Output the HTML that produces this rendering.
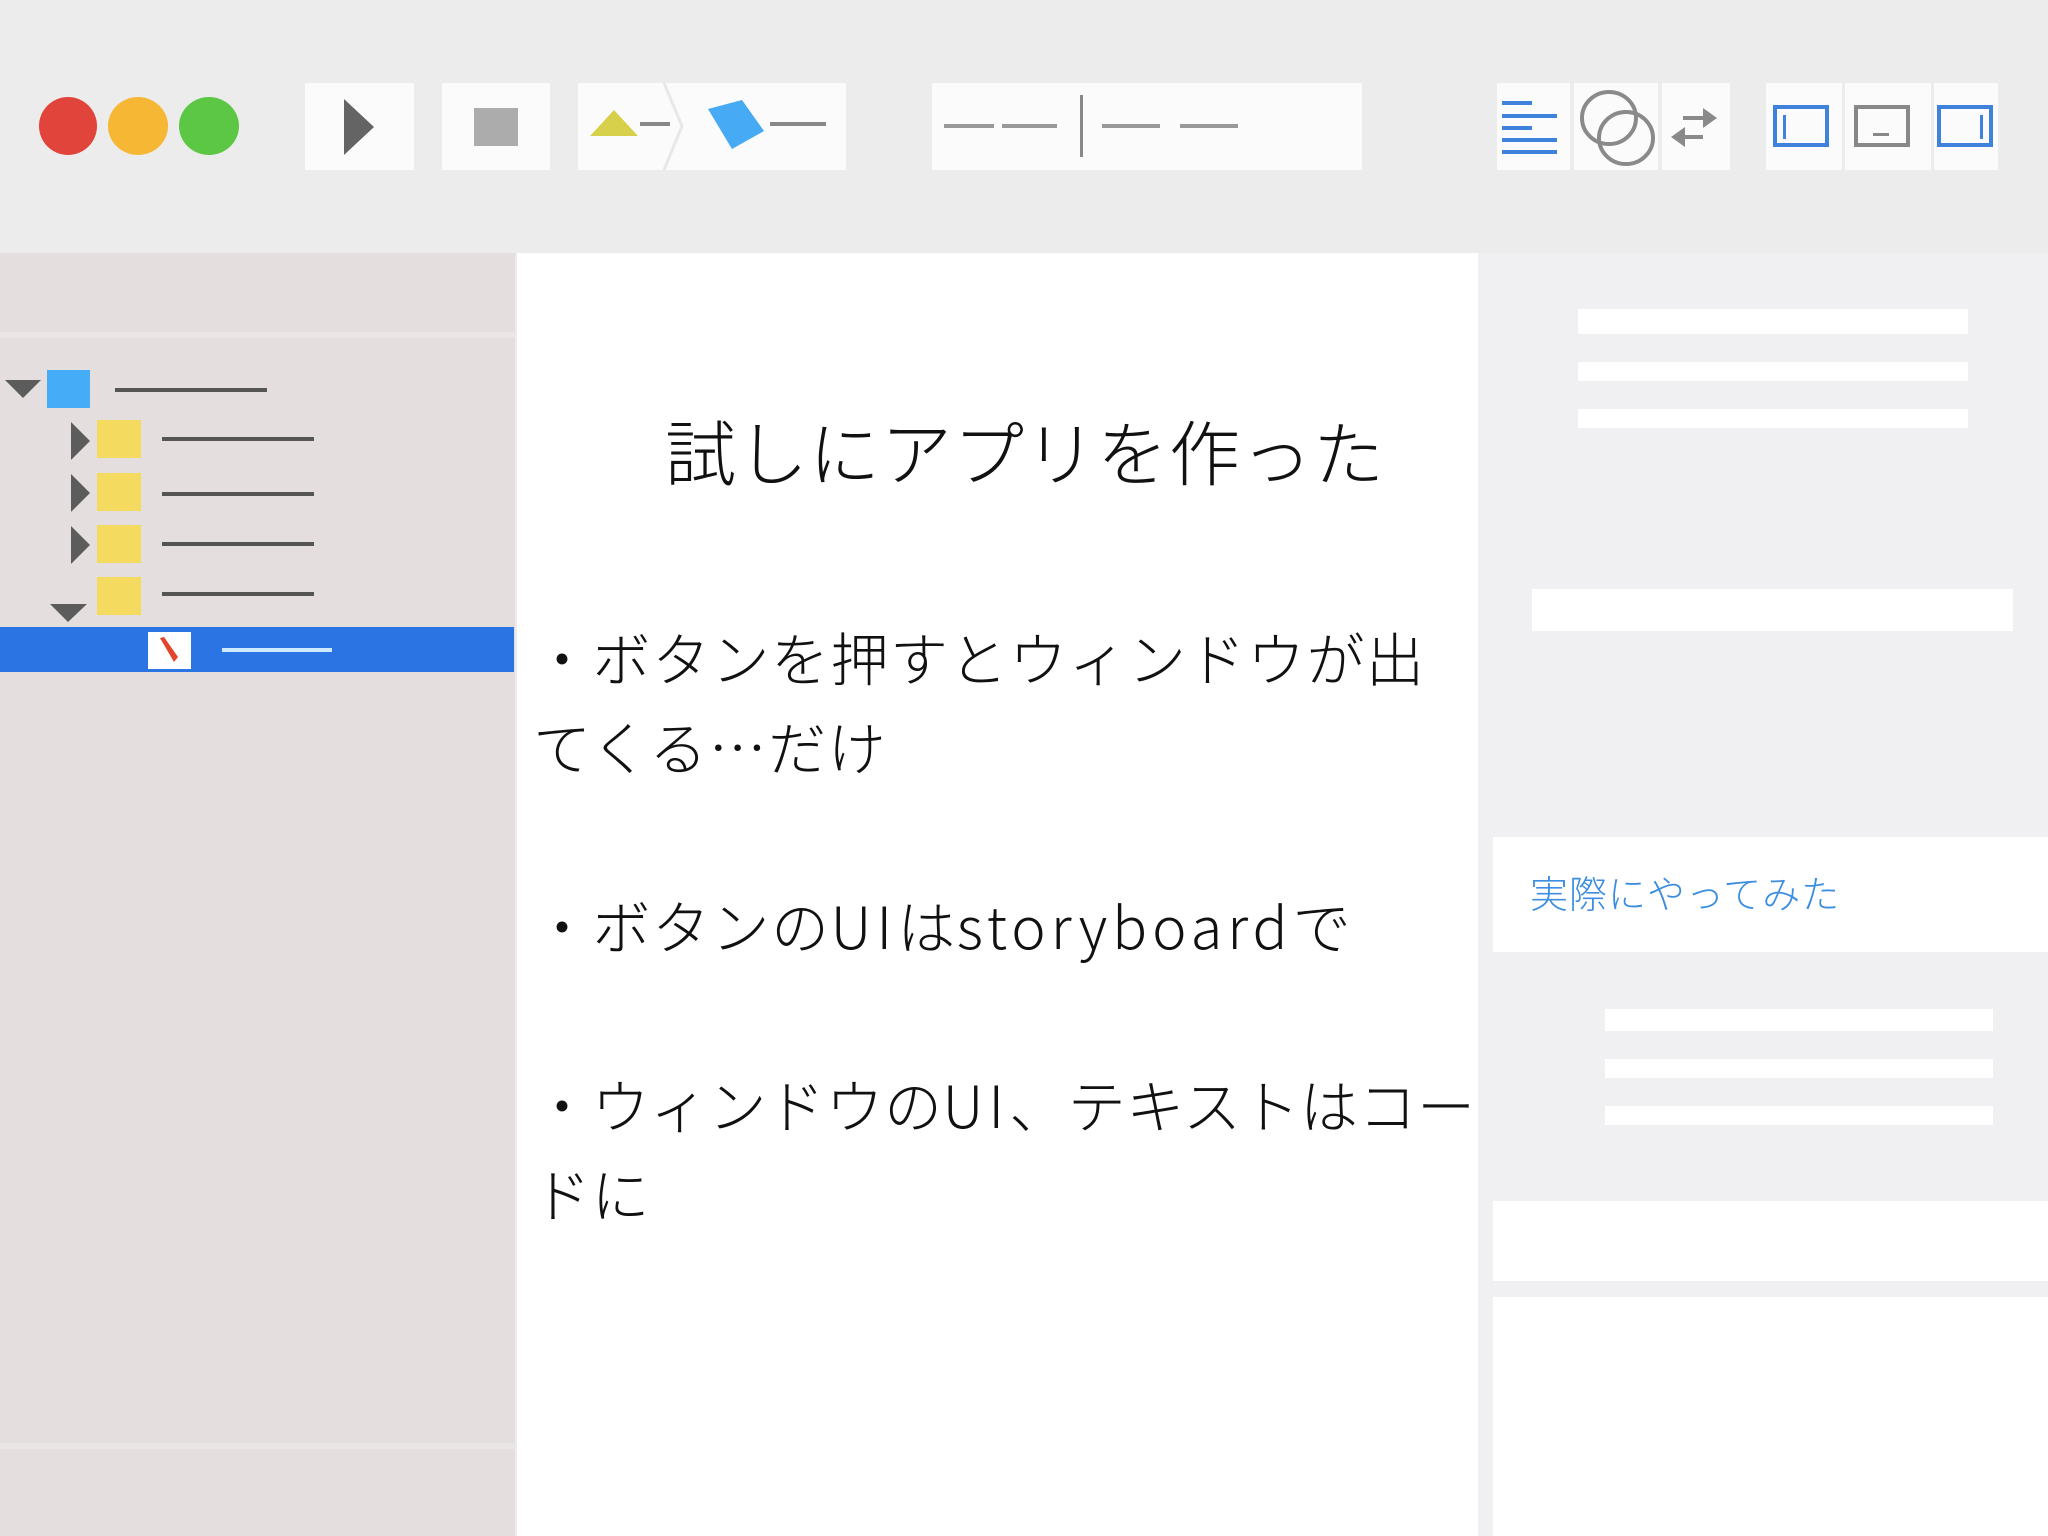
<!DOCTYPE html>
<html><head><meta charset="utf-8"><style>
*{margin:0;padding:0;box-sizing:border-box}
body{width:2048px;height:1536px;position:relative;overflow:hidden;background:#ececec;font-family:"Liberation Sans","Noto Sans CJK JP",sans-serif}
.a{position:absolute}
.btn{position:absolute;background:#fbfbfb}
.txt{position:absolute;white-space:nowrap;color:#111;font-weight:300;font-family:"Noto Sans CJK JP","Liberation Sans",sans-serif}
.w{position:absolute;background:#fff}
.lat{letter-spacing:5px}
</style></head><body>
<!-- toolbar -->
<div class="a" style="left:39px;top:97px;width:58px;height:58px;border-radius:50%;background:#e0443a"></div>
<div class="a" style="left:108px;top:97px;width:60px;height:58px;border-radius:50%;background:#f6b735"></div>
<div class="a" style="left:179px;top:97px;width:60px;height:58px;border-radius:50%;background:#5bc745"></div>
<div class="btn" style="left:305px;top:83px;width:109px;height:87px"></div>
<svg class="a" style="left:340px;top:97px" width="40" height="60"><polygon points="4,2 34,30 4,58" fill="#646464"/></svg>
<div class="btn" style="left:442px;top:83px;width:108px;height:87px"></div>
<div class="a" style="left:474px;top:108px;width:44px;height:38px;background:#acacac"></div>
<div class="btn" style="left:578px;top:83px;width:268px;height:87px"></div>
<svg class="a" style="left:578px;top:83px" width="268" height="87"><polyline points="86,0 104,43 86,87" fill="none" stroke="#e8e8e8" stroke-width="3"/><polygon points="12,53 36,27 60,53" fill="#d6d04a"/><rect x="62" y="39" width="30" height="4" fill="#888"/><polygon points="130,26 164,17 186,48 154,66" fill="#46aaf5"/><rect x="192" y="39" width="56" height="4" fill="#888"/></svg>
<div class="btn" style="left:932px;top:83px;width:430px;height:87px"></div>
<svg class="a" style="left:932px;top:83px" width="430" height="87"><rect x="12" y="41" width="50" height="4" fill="#999"/><rect x="70" y="41" width="55" height="4" fill="#999"/><rect x="148" y="12" width="3" height="62" fill="#888"/><rect x="170" y="41" width="58" height="4" fill="#999"/><rect x="248" y="41" width="58" height="4" fill="#999"/></svg>
<div class="btn" style="left:1497px;top:83px;width:73px;height:87px"></div>
<div class="btn" style="left:1574px;top:83px;width:84px;height:87px"></div>
<div class="btn" style="left:1662px;top:83px;width:68px;height:87px"></div>
<svg class="a" style="left:1497px;top:83px" width="233" height="87"><g fill="#3f82dc"><rect x="5" y="18" width="30" height="4"/><rect x="5" y="31" width="55" height="4"/><rect x="5" y="43" width="30" height="4"/><rect x="5" y="55" width="55" height="4"/><rect x="5" y="67" width="55" height="4"/></g><g fill="none" stroke="#8a8a8a" stroke-width="4"><ellipse cx="112" cy="35" rx="27" ry="26"/><ellipse cx="129" cy="55" rx="27" ry="26"/></g><g fill="#8a8a8a"><rect x="186" y="33" width="24" height="4"/><polygon points="206,25 220,35 206,45"/><rect x="184" y="52" width="22" height="4"/><polygon points="188,44 174,54 188,64"/></g></svg>
<div class="btn" style="left:1766px;top:83px;width:76px;height:87px"></div>
<div class="btn" style="left:1845px;top:83px;width:86px;height:87px"></div>
<div class="btn" style="left:1934px;top:83px;width:64px;height:87px"></div>
<svg class="a" style="left:1766px;top:83px" width="232" height="87"><g fill="none" stroke-width="4"><rect x="9" y="24" width="52" height="38" stroke="#3f82dc"/><rect x="90" y="24" width="52" height="38" stroke="#888"/><rect x="173" y="24" width="52" height="38" stroke="#3f82dc"/></g><rect x="17" y="32" width="3" height="24" fill="#3f82dc"/><rect x="107" y="50" width="16" height="3" fill="#888"/><rect x="214" y="32" width="3" height="24" fill="#3f82dc"/></svg>
<!-- sidebar -->
<div class="a" style="left:0;top:253px;width:515px;height:1283px;background:#e4dede"></div>
<div class="a" style="left:0;top:332px;width:515px;height:6px;background:#ebe6e6"></div>
<div class="a" style="left:0;top:1443px;width:515px;height:6px;background:#ebe6e6"></div>
<svg class="a" style="left:0;top:370px" width="515" height="310"><g fill="#5c5c5c"><polygon points="5,10 41,10 23,28"/><polygon points="71,52 90,71 71,90"/><polygon points="71,104 90,123 71,142"/><polygon points="71,156 90,175 71,194"/><polygon points="50,234 87,234 68,252"/></g><rect x="47" y="0" width="43" height="38" fill="#45adf7"/><g fill="#f5da60"><rect x="97" y="50" width="44" height="38"/><rect x="97" y="103" width="44" height="38"/><rect x="97" y="155" width="44" height="38"/><rect x="97" y="207" width="44" height="38"/></g><g fill="#555"><rect x="115" y="18" width="152" height="4"/><rect x="162" y="67" width="152" height="4"/><rect x="162" y="122" width="152" height="4"/><rect x="162" y="172" width="152" height="4"/><rect x="162" y="222" width="152" height="4"/></g></svg>
<div class="a" style="left:0;top:627px;width:514px;height:45px;background:#2a74e4"></div>
<div class="a" style="left:148px;top:632px;width:43px;height:37px;background:#fff"></div>
<svg class="a" style="left:148px;top:632px" width="43" height="37"><polygon points="12,6 16,5 30,25 26,30" fill="#e2452b"/></svg>
<div class="a" style="left:222px;top:648px;width:110px;height:4px;background:#cfeaff"></div>
<!-- main -->
<div class="w" style="left:517px;top:253px;width:961px;height:1283px"></div>
<div class="txt" style="left:665px;top:400px;font-size:71px;line-height:100px;letter-spacing:1px">試しにアプリを作った</div>
<div class="txt" style="left:533px;top:612px;font-size:58px;line-height:89px;letter-spacing:1.5px">・ボタンを押すとウィンドウが出<br>てくる…だけ</div>
<div class="txt" style="left:533px;top:880px;font-size:58px;line-height:89px;letter-spacing:1.5px">・ボタンの<span class="lat">UI</span>は<span class="lat">storyboard</span>で</div>
<div class="txt" style="left:533px;top:1059px;font-size:58px;line-height:89px;letter-spacing:0.5px">・ウィンドウの<span class="lat">UI</span>、テキストはコー<br>ドに</div>
<!-- right panel -->
<div class="a" style="left:1478px;top:253px;width:570px;height:1283px;background:#f0eff1"></div>
<div class="w" style="left:1578px;top:309px;width:390px;height:25px"></div>
<div class="w" style="left:1578px;top:362px;width:390px;height:19px"></div>
<div class="w" style="left:1578px;top:409px;width:390px;height:19px"></div>
<div class="w" style="left:1532px;top:589px;width:481px;height:42px"></div>
<div class="w" style="left:1493px;top:837px;width:555px;height:115px"></div>
<div class="txt" style="left:1530px;top:867px;font-size:38px;line-height:50px;color:#3d8ee0;letter-spacing:1px">実際にやってみた</div>
<div class="w" style="left:1605px;top:1009px;width:388px;height:22px"></div>
<div class="w" style="left:1605px;top:1059px;width:388px;height:19px"></div>
<div class="w" style="left:1605px;top:1106px;width:388px;height:19px"></div>
<div class="w" style="left:1493px;top:1201px;width:555px;height:80px"></div>
<div class="w" style="left:1493px;top:1297px;width:555px;height:239px"></div>
</body></html>
